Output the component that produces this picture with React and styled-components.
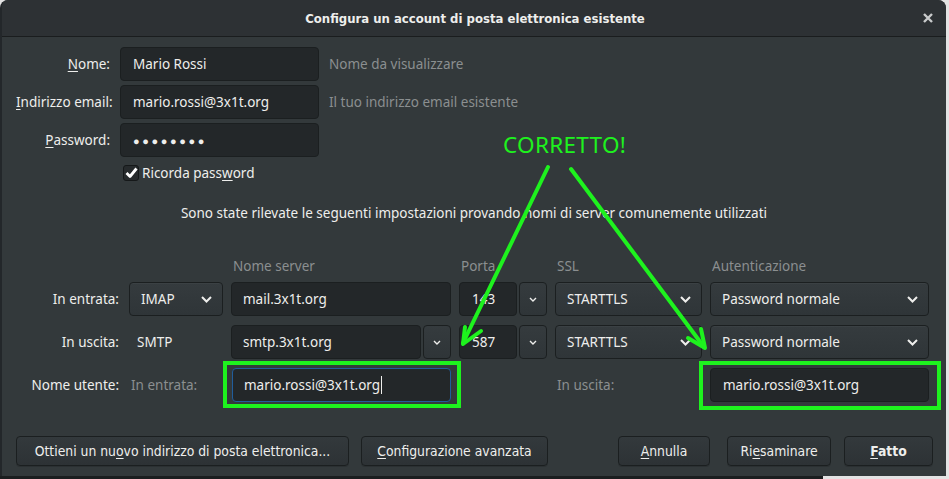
import React from "react";
import styled, { createGlobalStyle } from "styled-components";

const Global = createGlobalStyle`
  html, body { margin: 0; padding: 0; }
  body {
    background: #e3e3e3;
    font-family: "Noto Sans", "Open Sans", sans-serif;
    font-size: 13.5px;
    color: #eeeeec;
    width: 949px;
    height: 479px;
    overflow: hidden;
  }
  u { text-decoration-thickness: 1px; text-underline-offset: 2px; }
`;

const Page = styled.div`
  display: flex;
  flex-direction: column;
  width: 949px;
`;

const Window = styled.div`
  position: relative;
  width: 946px;
  height: 476px;
  background: #33393b;
  border-radius: 8px 8px 0 0;
  border-left: 2px solid #23272a;
  box-sizing: border-box;
  display: flex;
  flex-direction: column;
  overflow: hidden;
`;

const BottomShadow = styled.div`
  width: 823px;
  height: 3px;
  background: #1b1e1f;
`;

const TitleBar = styled.div`
  height: 36px;
  flex: none;
  background: #2d3134;
  border-bottom: 1px solid #1a1d1e;
  display: flex;
  align-items: center;
  justify-content: center;
  position: relative;
`;

const Title = styled.div`
  font-family: "DejaVu Sans Condensed", "Liberation Sans Narrow", sans-serif;
  font-weight: bold;
  font-size: 13px;
  color: #eeeeec;
  margin-left: 2px;
`;

const Close = styled.div`
  position: absolute;
  right: 12px;
  top: 12px;
  width: 12px;
  height: 12px;
  display: flex;
`;

const Body = styled.div`
  flex: 1;
  display: flex;
  flex-direction: column;
  padding: 10px 0 0 14px;
`;

const TopGrid = styled.div`
  display: grid;
  grid-template-columns: 94px 199px auto;
  column-gap: 10px;
  row-gap: 4px;
  align-items: center;
`;

const Label = styled.div`
  text-align: right;
  color: ${(p) => (p.$dim ? "#8b8f90" : "#eeeeec")};
  white-space: nowrap;
  padding-right: ${(p) => p.$pr || 0}px;
`;

const Hint = styled.div`
  color: #8b8f90;
  white-space: nowrap;
`;

const Entry = styled.div`
  height: 34px;
  box-sizing: border-box;
  background: #232729;
  border: 1px solid ${(p) => (p.$focus ? "#215d9c" : "#1b1f20")};
  border-radius: 4px;
  display: flex;
  align-items: center;
  padding-left: ${(p) => p.$pl || 12}px;
  color: #eeeeec;
  white-space: nowrap;
  font-size: ${(p) => (p.$dots ? "11px" : "inherit")};
  letter-spacing: ${(p) => (p.$dots ? "2.6px" : "normal")};
`;

const Caret = styled.span`
  display: inline-block;
  width: 1px;
  height: 18px;
  background: #eeeeec;
  margin-left: 1px;
`;

const CheckRow = styled.div`
  display: flex;
  align-items: center;
  gap: 3px;
  margin: 7px 0 0 107px;
  height: 18px;
`;

const CheckBox = styled.div`
  width: 14px;
  height: 14px;
  border: 1px solid #151819;
  border-radius: 3px;
  background: #262a2c;
  display: flex;
  align-items: center;
  justify-content: center;
`;

const Info = styled.div`
  text-align: center;
  margin: 21px 0 0 -14px;
  line-height: 20px;
  font-size: 13.5px;
`;

const ServerGrid = styled.div`
  display: grid;
  grid-template-columns: 105px 94px 220px 88px 147px 219px;
  column-gap: 8px;
  grid-template-rows: 18px 34px 34px 34px;
  row-gap: 9px;
  align-items: center;
  margin-top: 32px;
`;

const Header = styled.div`
  color: #8b8f90;
  padding-left: 2px;
  margin-bottom: -4px;
`;

const Cell = styled.div`
  display: flex;
  gap: 2px;
  align-items: center;
  padding-left: ${(p) => p.$pl || 0}px;
  color: ${(p) => (p.$dim ? "#8b8f90" : "#eeeeec")};
`;

const Combo = styled.div`
  flex: 1;
  height: 34px;
  box-sizing: border-box;
  border: 1px solid #1b1f20;
  border-radius: 4px;
  background: linear-gradient(#353b3e, #2f3538);
  box-shadow: inset 0 1px rgba(255,255,255,0.03);
  display: flex;
  align-items: center;
  justify-content: space-between;
  padding: 0 10px 0 11px;
  white-space: nowrap;
`;

const SmallBtn = styled.div`
  width: 28px;
  height: 34px;
  flex: none;
  box-sizing: border-box;
  border: 1px solid #1b1f20;
  border-radius: 4px;
  background: linear-gradient(#353b3e, #2f3538);
  display: flex;
  align-items: center;
  justify-content: center;
`;

const FieldEntry = styled(Entry)`
  flex: 1;
`;

const Footer = styled.div`
  display: flex;
  align-items: center;
  margin-top: auto;
  margin-bottom: 10px;
  padding-right: 13px;
`;

const Button = styled.div`
  width: ${(p) => p.$w}px;
  height: 30px;
  box-sizing: border-box;
  margin-left: ${(p) => p.$ml || 0}px;
  border: 1px solid #1b1f20;
  border-radius: 4px;
  background: linear-gradient(#33393c, #2d3235);
  box-shadow: 0 1px rgba(0,0,0,0.15);
  display: flex;
  align-items: center;
  justify-content: center;
  font-family: "DejaVu Sans Condensed", "Liberation Sans Narrow", sans-serif;
  font-size: 13.8px;
  color: #eeeeec;
  white-space: nowrap;
`;

const Spacer = styled.div`
  flex: 1;
`;

const Overlay = styled.svg`
  position: absolute;
  left: -2px;
  top: 0;
  pointer-events: none;
`;

const Correct = styled.div`
  position: absolute;
  left: 501px;
  top: 130px;
  color: #1ef21e;
  font-size: 22.5px;
  line-height: 30px;
  font-family: "Noto Sans", sans-serif;
  letter-spacing: 0.3px;
`;

const Chevron = ({ small }) =>
  small ? (
    <svg width="8" height="5" viewBox="0 0 8 5">
      <path d="M1 1 L4 4 L7 1" fill="none" stroke="#eeeeec" strokeWidth="1.4" />
    </svg>
  ) : (
    <svg width="11" height="7" viewBox="0 0 11 7">
      <path d="M1 1 L5.5 5.5 L10 1" fill="none" stroke="#eeeeec" strokeWidth="2" />
    </svg>
  );

const Check = () => (
  <svg width="13" height="12" viewBox="0 0 13 12">
    <path d="M1.5 6 L5 9.5 L11.5 1.5" fill="none" stroke="#ffffff" strokeWidth="2.8" strokeLinejoin="round" />
  </svg>
);

const CloseIcon = () => (
  <svg width="12" height="12" viewBox="0 0 12 12">
    <path d="M2 2 L10 10 M10 2 L2 10" stroke="#c9cbcc" strokeWidth="2.4" />
  </svg>
);

export default function App() {
  const G = "#1ef21e";
  return (
    <>
      <Global />
      <Page>
        <Window>
          <TitleBar>
            <Title>Configura un account di posta elettronica esistente</Title>
            <Close>
              <CloseIcon />
            </Close>
          </TitleBar>
          <Body>
            <TopGrid>
              <Label>
                <u>N</u>ome:
              </Label>
              <Entry>Mario Rossi</Entry>
              <Hint>Nome da visualizzare</Hint>
              <Label>
                <u>I</u>ndirizzo email:
              </Label>
              <Entry>mario.rossi@3x1t.org</Entry>
              <Hint>Il tuo indirizzo email esistente</Hint>
              <Label>
                <u>P</u>assword:
              </Label>
              <Entry $dots>●●●●●●●●</Entry>
              <Hint />
            </TopGrid>
            <CheckRow>
              <CheckBox>
                <Check />
              </CheckBox>
              <span>
                Ricorda pass<u>w</u>ord
              </span>
            </CheckRow>
            <Info>Sono state rilevate le seguenti impostazioni provando nomi di server comunemente utilizzati</Info>
            <ServerGrid>
              <span />
              <span />
              <Header>Nome server</Header>
              <Header>Porta</Header>
              <Header>SSL</Header>
              <Header>Autenticazione</Header>

              <Label $pr={2}>In entrata:</Label>
              <Cell>
                <Combo>
                  IMAP <Chevron />
                </Combo>
              </Cell>
              <Cell>
                <FieldEntry $pl={11}>mail.3x1t.org</FieldEntry>
              </Cell>
              <Cell>
                <FieldEntry $pl={12}>143</FieldEntry>
                <SmallBtn>
                  <Chevron small />
                </SmallBtn>
              </Cell>
              <Cell>
                <Combo>
                  STARTTLS <Chevron />
                </Combo>
              </Cell>
              <Cell>
                <Combo>
                  Password normale <Chevron />
                </Combo>
              </Cell>

              <Label $pr={2}>In uscita:</Label>
              <Cell $pl={8}>SMTP</Cell>
              <Cell>
                <FieldEntry $pl={11}>smtp.3x1t.org</FieldEntry>
                <SmallBtn>
                  <Chevron small />
                </SmallBtn>
              </Cell>
              <Cell>
                <FieldEntry $pl={12}>587</FieldEntry>
                <SmallBtn>
                  <Chevron small />
                </SmallBtn>
              </Cell>
              <Cell>
                <Combo>
                  STARTTLS <Chevron />
                </Combo>
              </Cell>
              <Cell>
                <Combo>
                  Password normale <Chevron />
                </Combo>
              </Cell>

              <Label $pr={2}>Nome utente:</Label>
              <Cell $pl={2} $dim>
                In entrata:
              </Cell>
              <Cell $pl={1}>
                <FieldEntry $focus $pl={11}>
                  mario.rossi@3x1t.org
                  <Caret />
                </FieldEntry>
              </Cell>
              <span />
              <Cell $pl={2} $dim>
                In uscita:
              </Cell>
              <Cell>
                <FieldEntry $pl={12}>mario.rossi@3x1t.org</FieldEntry>
              </Cell>
            </ServerGrid>
            <Footer>
              <Button $w={333}>
                Ottieni un nu<u>o</u>vo indirizzo di posta elettronica...
              </Button>
              <Button $w={187} $ml={12}>
                <u>C</u>onfigurazione avanzata
              </Button>
              <Spacer />
              <Button $w={92}>
                <u>A</u>nnulla
              </Button>
              <Button $w={104} $ml={17}>
                Ri<u>e</u>saminare
              </Button>
              <Button $w={89} $ml={13}>
                <b>
                  <u>F</u>atto
                </b>
              </Button>
            </Footer>
          </Body>
          <Correct>CORRETTO!</Correct>
          <Overlay width="949" height="479" viewBox="0 0 949 479">
            <g stroke={G} strokeWidth="4" fill="none" strokeLinecap="round">
              <path d="M548 167 L463 343" />
              <path d="M463 344 L465 327 M463 344 L481 331" />
              <path d="M571 169 L704 347" />
              <path d="M705 348 L688 338 M705 348 L701 329" />
            </g>
            <g stroke={G} strokeWidth="4" fill="none">
              <rect x="225" y="363" width="234" height="43" />
              <rect x="701" y="363" width="238" height="45" />
            </g>
          </Overlay>
        </Window>
        <BottomShadow />
      </Page>
    </>
  );
}
